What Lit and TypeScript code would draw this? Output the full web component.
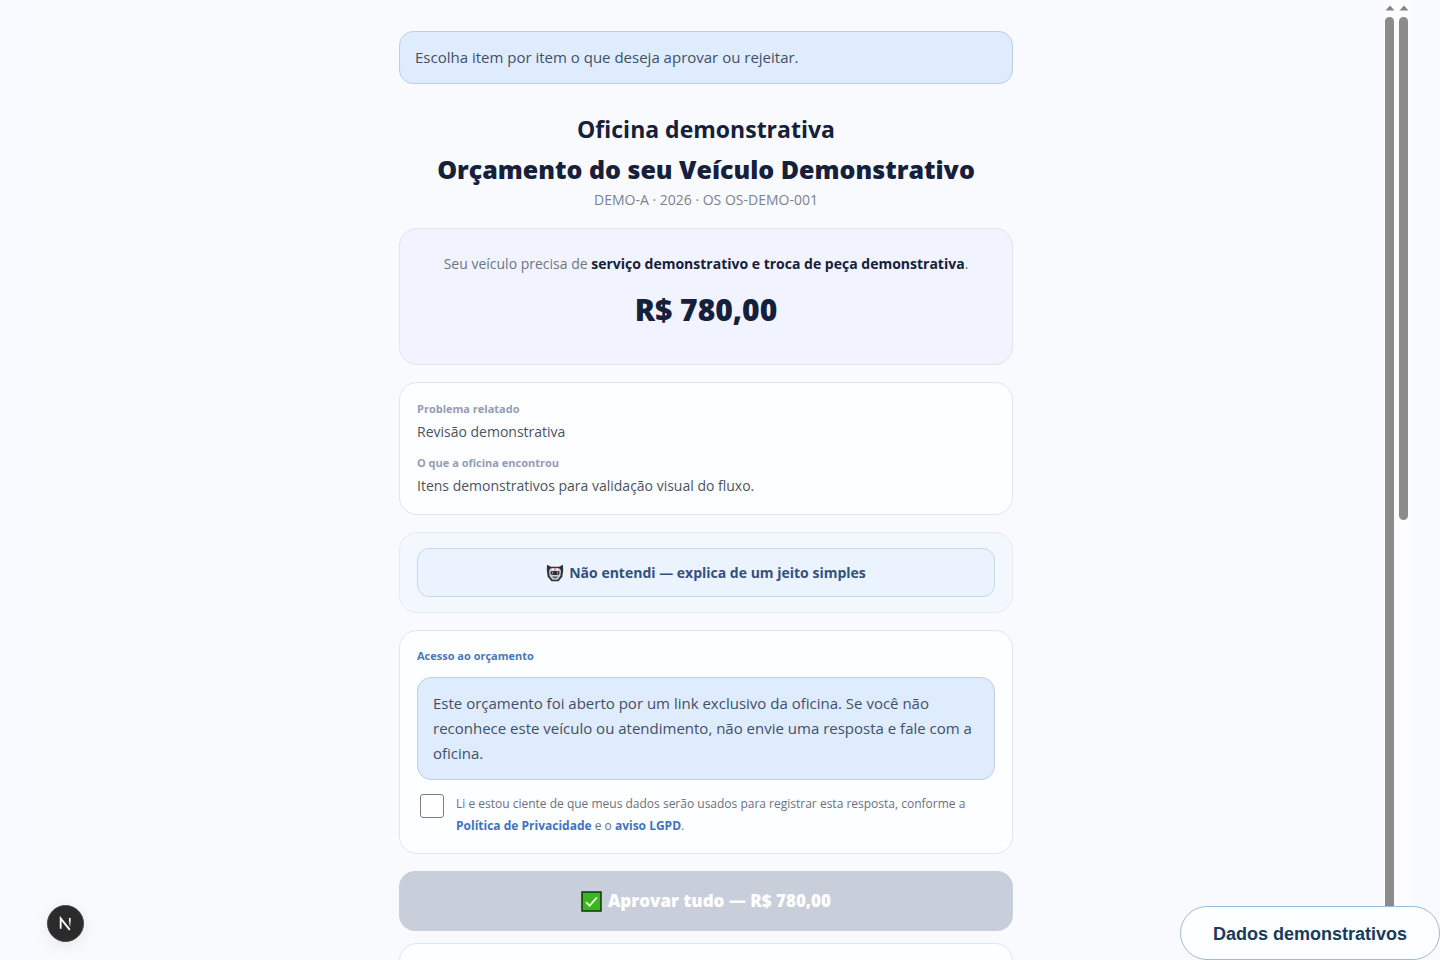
import { LitElement, html, css, svg } from "lit";
import { customElement, property } from "lit/decorators.js";

/** A scroll lane: an arrow head on top of a rounded thumb. */
@customElement("scroll-lane")
class ScrollLane extends LitElement {
  /** Share of the lane's height that the thumb takes, in percent. */
  @property({ type: Number }) size = 100;

  static styles = css`
    :host {
      display: flex;
      flex-direction: column;
      align-items: center;
      width: 14px;
      box-sizing: border-box;
      padding: 5px 3px 0 0;
      background: #fcfcfe;
    }
    .arrow {
      display: block;
      flex: none;
      width: 10px;
      height: 6px;
      margin-bottom: 6px;
      fill: #858585;
    }
    .thumb {
      width: 9px;
      border-radius: 5px;
      background: #8b8b8b;
    }
  `;

  render() {
    return html`
      <svg class="arrow" viewBox="0 0 10 6" aria-hidden="true"><path d="M5 0.5 9.5 5.5H0.5z" /></svg>
      <div class="thumb" style="height:${this.size}%"></div>
    `;
  }
}

const mask = svg`
  <path d="M1 .8 5 2.800h8l4-2 .2 5.700-.9 6.200L12.500 17.200h-7L1.700 12.700.8 6.500z" fill="#30323a"/>
  <path d="M4.200 4.600h9.600l1.200 2.500-.6 4.900-2.900 3.800h-5L3.600 12 3 7.100z" fill="#c9cdd3"/>
  <path d="M5 4.200h8l-1 2.300H6z" fill="#f3f3f5"/>
  <path d="M8.500 3.400h1v3H8.500zM4.600 4.300l1.700.1-.9.900zM13.400 4.300l-1.700.1.9.9z" fill="#d8404c"/>
  <path d="M4.400 7.600 7.500 7h3l3.100.6-.5 2.900-2.600.5h-3l-2.600-.5z" fill="#2c2f37"/>
  <circle cx="6.600" cy="8.800" r=".6" fill="#fff"/><circle cx="11.400" cy="8.800" r=".6" fill="#fff"/>
  <path d="M6.200 12.400h5.600l-1.300 1.800h-3z" fill="#5b5f68"/>`;

@customElement("app-root")
class AppRoot extends LitElement {
  static styles = css`
    :host {
      display: block;
      height: 100vh;
      overflow: hidden;
      position: relative;
      color: #15203a;
      font-family: "Open Sans", "Noto Sans", sans-serif;
    }
    * {
      box-sizing: border-box;
    }
    .frame {
      display: flex;
      height: 100%;
      padding: 0 28px;
      background: #f7fafe;
    }
    .page {
      flex: 1;
      min-width: 0;
      overflow: hidden;
      padding-top: 31px;
      background: #f8fafe;
    }
    .lanes {
      display: flex;
      flex: none;
      width: 28px;
    }
    .column {
      display: flex;
      flex-direction: column;
      gap: 17px;
      max-width: 614px;
      margin: 0 auto;
    }
    h1,
    h2,
    p {
      margin: 0;
    }
    .notice {
      padding: 13px 15px;
      border: 1px solid #bdd0e2;
      border-radius: 14px;
      background: #dfecfd;
      color: #41506a;
      font-size: 15px;
      line-height: 25px;
    }
    .heading {
      padding-top: 8px;
      text-align: center;
    }
    .shop {
      font-size: 23px;
      font-weight: 700;
      line-height: 40px;
    }
    .title {
      font-size: 25px;
      font-weight: 900;
      line-height: 40px;
    }
    .meta {
      color: #7c828e;
      font-size: 14px;
      line-height: 22px;
    }
    .card {
      padding: 16px 17px;
      border: 1px solid #dfe5ee;
      border-radius: 18px;
      background: #fdfeff;
    }
    .summary {
      padding: 23px 16px 34px;
      background: #f1f4fe;
      text-align: center;
      color: #6d7483;
      font-size: 14px;
      line-height: 24px;
    }
    .summary strong {
      color: #15203a;
    }
    .price {
      color: #15203a;
      font-size: 30px;
      font-weight: 900;
      line-height: 40px;
      padding-top: 14px;
      box-sizing: content-box;
    }
    .report {
      padding: 17px 17px 14px;
    }
    .label {
      color: #929db3;
      font-size: 11px;
      font-weight: 700;
      line-height: 18px;
    }
    .value {
      color: #4c535f;
      font-size: 14px;
      line-height: 28px;
    }
    .label.second {
      padding-top: 8px;
    }
    .explain {
      padding: 15px 17px;
      background: #f3f7fe;
      border-color: #e4ebf5;
    }
    .explain-btn {
      display: flex;
      align-items: center;
      justify-content: center;
      gap: 5px;
      width: 100%;
      height: 49px;
      border: 1px solid #c8d8ea;
      border-radius: 12px;
      background: #ebf3fe;
      color: #34507f;
      font: 700 14px/20px "Open Sans", "Noto Sans", sans-serif;
    }
    .label.blue {
      color: #4a78b8;
      padding-bottom: 12px;
    }
    .consent {
      display: flex;
      gap: 12px;
      padding: 13px 0 0 3px;
    }
    .consent input {
      appearance: none;
      flex: none;
      width: 24px;
      height: 24px;
      margin: 1px 0 0;
      border: 1px solid #7d7d7d;
      border-radius: 3px;
      background: #fff;
    }
    .consent label {
      color: #6a7180;
      font-size: 12px;
      line-height: 22px;
    }
    .consent a {
      color: #3f73bf;
      font-weight: 700;
      text-decoration: none;
    }
    .approve {
      display: flex;
      align-items: center;
      justify-content: center;
      gap: 6px;
      width: 100%;
      height: 60px;
      border: 0;
      border-radius: 16px;
      background: #c9cfda;
      color: #fff;
      font: 900 17px/24px "Open Sans", "Noto Sans", sans-serif;
    }
    .actions {
      display: flex;
      flex-direction: column;
      gap: 12px;
    }
    .next {
      height: 120px;
    }
    .icon {
      display: block;
      flex: none;
    }
    .dev {
      position: absolute;
      left: 47px;
      bottom: 18px;
      display: grid;
      place-items: center;
      width: 37px;
      height: 37px;
      padding: 0;
      border: 1px solid #4a4a4a;
      border-radius: 50%;
      background: #2b2b2b;
      box-shadow: 0 4px 16px #00000014;
    }
    .badge {
      position: absolute;
      right: 0;
      bottom: 0;
      padding: 15px 32px 12px;
      border: 1px solid #9dbbd3;
      border-radius: 27px;
      background: #fdfeff;
      color: #183b5c;
      font: 700 18px/25px "Liberation Sans", Arial, sans-serif;
    }
  `;

  render() {
    return html`
      <div class="frame">
        <main class="page">
          <div class="column">
            <p class="notice">Escolha item por item o que deseja aprovar ou rejeitar.</p>
            <header class="heading">
              <h2 class="shop">Oficina demonstrativa</h2>
              <h1 class="title">Orçamento do seu Veículo Demonstrativo</h1>
              <p class="meta">DEMO-A · 2026 · OS OS-DEMO-001</p>
            </header>
            <section class="card summary">
              <p>Seu veículo precisa de <strong>serviço demonstrativo e troca de peça demonstrativa</strong>.</p>
              <p class="price">R$ 780,00</p>
            </section>
            <section class="card report">
              <p class="label">Problema relatado</p>
              <p class="value">Revisão demonstrativa</p>
              <p class="label second">O que a oficina encontrou</p>
              <p class="value">Itens demonstrativos para validação visual do fluxo.</p>
            </section>
            <section class="card explain">
              <button class="explain-btn" type="button">
                <svg class="icon" width="18" height="18" viewBox="0 0 18 18" aria-hidden="true">${mask}</svg>
                <span>Não entendi — explica de um jeito simples</span>
              </button>
            </section>
            <section class="card">
              <p class="label blue">Acesso ao orçamento</p>
              <p class="notice">
                Este orçamento foi aberto por um link exclusivo da oficina. Se você não reconhece este veículo ou
                atendimento, não envie uma resposta e fale com a oficina.
              </p>
              <div class="consent">
                <input id="consent" type="checkbox" />
                <label for="consent"
                  >Li e estou ciente de que meus dados serão usados para registrar esta resposta, conforme a
                  <a href="#privacidade">Política de Privacidade</a> e o <a href="#lgpd">aviso LGPD</a>.</label
                >
              </div>
            </section>
            <div class="actions">
              <button class="approve" type="button" disabled>
                <svg class="icon" width="21" height="21" viewBox="0 0 21 21" aria-hidden="true">
                  <rect x="1" y="1" width="19" height="19" fill="#3cb521" stroke="#14300f" stroke-width="1.500" />
                  <path d="M5 11.200 8.600 14.600 16 6.300" fill="none" stroke="#e6ffe0" stroke-width="1.800" />
                </svg>
                <span>Aprovar tudo — R$ 780,00</span>
              </button>
              <section class="card next"></section>
            </div>
          </div>
        </main>
        <div class="lanes" aria-hidden="true">
          <scroll-lane size="100"></scroll-lane>
          <scroll-lane size="52.7"></scroll-lane>
        </div>
      </div>
      <button class="dev" type="button" aria-label="Dev tools">
        <svg class="icon" width="15" height="15" viewBox="0 0 14 14" aria-hidden="true">
          <defs>
            <linearGradient id="fade" x1="0" y1="0" x2="0" y2="1">
              <stop offset="0.300" stop-color="#fff" />
              <stop offset="1" stop-color="#fff" stop-opacity="0.100" />
            </linearGradient>
          </defs>
          <path d="M2.500 12V2.200L11 13" fill="none" stroke="#fff" stroke-width="1.700" />
          <rect x="10.200" y="1.800" width="1.600" height="8.500" fill="url(#fade)" />
        </svg>
      </button>
      <aside class="badge">Dados demonstrativos</aside>
    `;
  }
}
